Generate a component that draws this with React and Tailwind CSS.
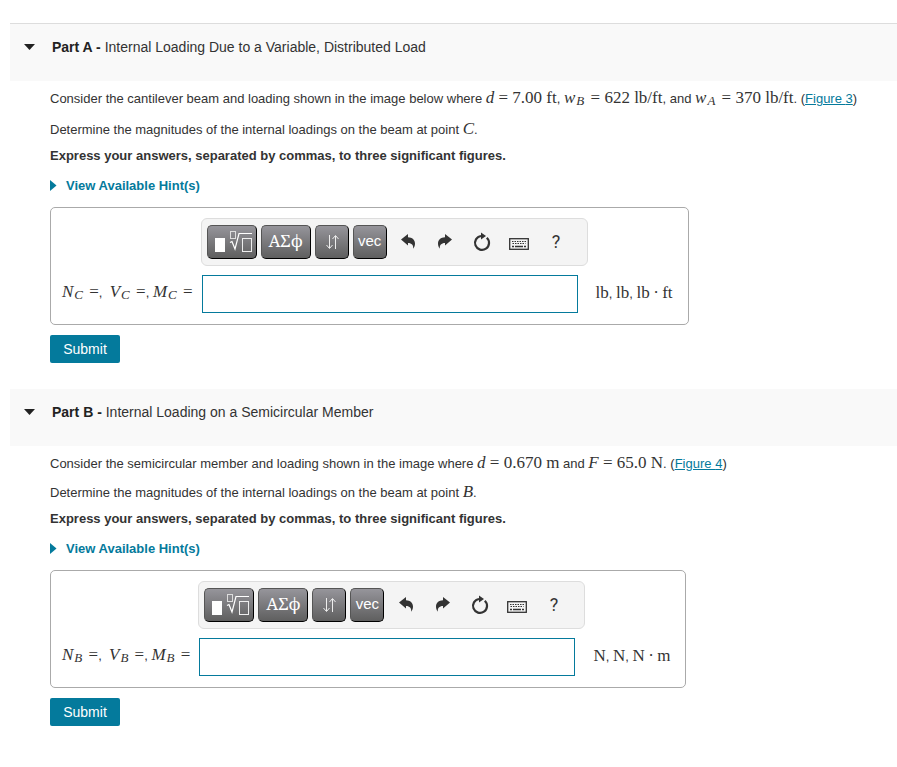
import React, { useState } from "react";

// Inline formula: upright numbers and units, italic variables with subscripts
const Formula = ({ children }) => (
  <span className="font-['Liberation_Serif',serif] text-[17px] leading-4">
    {children}
  </span>
);

const Variable = ({ name, sub }) => (
  <>
    <i>{name}</i>
    {sub && (
      <sub className="static mr-0.5 ml-px align-[-2px] text-[13px] leading-5 italic">
        {sub}
      </sub>
    )}
  </>
);

const TemplateIcon = () => (
  <svg width="40" height="26" viewBox="0 0 40 26" fill="none" aria-hidden="true">
    <rect x="3" y="9" width="10" height="14" fill="#fff" />
    <rect x="18.5" y="2.5" width="5" height="7" stroke="#ddd" />
    <path d="M18 13.5l2-1 3 7.5 4-15.5h13" stroke="#fff" strokeWidth="1.2" />
    <rect x="30.5" y="9.5" width="9" height="13" stroke="#eee" />
  </svg>
);

const ArrowsIcon = () => (
  <svg
    width="14"
    height="16"
    viewBox="0 0 14 16"
    fill="none"
    stroke="#eee"
    aria-hidden="true"
  >
    <path d="M4.5 1v13M1.5 11l3 3.5 3-3.5M10.5 15V2M7.5 5l3-3.5 3 3.5" />
  </svg>
);

const UndoIcon = () => (
  <svg width="16" height="18" viewBox="0 0 16 18" fill="#333" aria-hidden="true">
    <path d="M1 6.5L8 1v3.2c4.2.2 7 2.6 7 6.3 0 2-.6 3.8-1.8 5.3.3-3.8-1.4-5.7-5.2-5.8v2.5z" />
  </svg>
);

const RedoIcon = () => (
  <svg width="16" height="18" viewBox="0 0 16 18" fill="#333" aria-hidden="true">
    <path d="M15 6.5L8 1v3.2c-4.2.2-7 2.6-7 6.3 0 2 .6 3.8 1.8 5.3-.3-3.8 1.4-5.7 5.2-5.8v2.5z" />
  </svg>
);

const ResetIcon = () => (
  <svg width="18" height="20" viewBox="0 0 18 20" fill="none" aria-hidden="true">
    <path d="M13.8 5.8A7 7 0 1 1 8 4" stroke="#333" strokeWidth="2.2" />
    <path d="M8 .5L13 4 8 7.5z" fill="#333" />
  </svg>
);

const KeyboardIcon = () => (
  <svg width="20" height="12" viewBox="0 0 20 12" fill="none" aria-hidden="true">
    <rect x=".7" y=".7" width="18.6" height="10.6" stroke="#333" strokeWidth="1.3" />
    <path d="M3 3.5h14M3.5 5.5h13" stroke="#333" strokeDasharray="1.5 1" />
    <path d="M3 8.5h2M6 8.5h8M15 8.5h2" stroke="#333" strokeWidth="1.3" />
  </svg>
);

const darkButton =
  "flex h-[34px] items-center justify-center rounded-[5px] border border-[#555] border-r-black border-b-black bg-linear-to-b from-[#96959b] to-[#5f5f5f] text-white";

const iconButton = "flex h-[34px] w-[37px] items-center justify-center";

const Toolbar = () => (
  <div className="flex h-12 w-[387px] items-center rounded-md border border-[#ddd] bg-[#f4f4f4] pl-[5px]">
    <div className="flex gap-1">
      <button type="button" aria-label="Templates" className={`${darkButton} w-[50px]`}>
        <TemplateIcon />
      </button>
      <button
        type="button"
        aria-label="Symbols"
        className={`${darkButton} w-[50px] pb-0.5 font-['Noto_Serif','DejaVu_Serif',serif] text-[17px]`}
      >
        ΑΣϕ
      </button>
      <button type="button" aria-label="Arrows" className={`${darkButton} w-[34px]`}>
        <ArrowsIcon />
      </button>
      <button type="button" className={`${darkButton} w-[34px] pb-0.5 text-[15px]`}>
        vec
      </button>
    </div>
    <div className="ml-[3px] flex">
      <button type="button" aria-label="Undo" className={iconButton}>
        <UndoIcon />
      </button>
      <button type="button" aria-label="Redo" className={iconButton}>
        <RedoIcon />
      </button>
      <button type="button" aria-label="Reset" className={iconButton}>
        <ResetIcon />
      </button>
      <button
        type="button"
        aria-label="Keyboard shortcuts"
        className={`${iconButton} pt-1`}
      >
        <KeyboardIcon />
      </button>
      <button
        type="button"
        aria-label="Help"
        className={`${iconButton} font-[Roboto,sans-serif] text-lg text-[#333]`}
      >
        ?
      </button>
    </div>
  </div>
);

const AnswerBox = ({ id, label, units }) => {
  const [value, setValue] = useState("");

  return (
    <div className="mt-[10px] grid w-fit grid-cols-[auto_auto_auto] items-center gap-y-[9px] rounded-[5px] border border-[#aaa] pt-[10px] pr-[15px] pb-[11px] pl-[11px]">
      <div className="col-start-2">
        <Toolbar />
      </div>
      <label htmlFor={id} className="col-start-1 pr-2 whitespace-nowrap">
        {label}
      </label>
      <input
        id={id}
        type="text"
        value={value}
        onChange={(e) => setValue(e.target.value)}
        className="ml-px h-[38px] w-[376px] border border-[#047a9c] px-2 text-base outline-none"
      />
      <div className="pl-2 whitespace-nowrap">{units}</div>
    </div>
  );
};

const Unknown = ({ name, sub }) => (
  <Formula>
    <Variable name={name} sub={sub} /> =
  </Formula>
);

const Part = ({ name, title, question, point, units }) => {
  const [open, setOpen] = useState(true);

  return (
    <section className="mb-[26px]">
      <h2 className="h-[57px] bg-[#f9f9f9] pt-3 text-sm text-[#333]">
        <button
          type="button"
          aria-expanded={open}
          onClick={() => setOpen(!open)}
          className="flex items-center pl-[14px] leading-[22px]"
        >
          <svg width="11" height="6" viewBox="0 0 11 6" aria-hidden="true">
            <path d="M0 0h11L5.5 6z" fill="#222" />
          </svg>
          <span className="pl-[17px]">
            <b className="text-[#222]">Part {name} -</b> {title}
          </span>
        </button>
      </h2>
      {open && (
        <div className="pl-10">
          <p className="mt-2 leading-5">{question}</p>
          <p className="mt-2 leading-[22px]">
            Determine the magnitudes of the internal loadings on the beam at
            point{" "}
            <Formula>
              <Variable name={point} />
            </Formula>
            .
          </p>
          <p className="mt-1 leading-[22px] font-bold">
            Express your answers, separated by commas, to three significant
            figures.
          </p>
          <button
            type="button"
            className="mt-2 flex items-center gap-[9px] leading-[22px] font-bold text-[#047a9c]"
          >
            <svg width="7" height="12" viewBox="0 0 7 12" aria-hidden="true">
              <path d="M0 0l6.5 5.5L0 11z" fill="#047a9c" />
            </svg>
            View Available Hint(s)
          </button>
          <AnswerBox
            id={`answer-${name}`}
            label={
              <>
                <Unknown name="N" sub={point} />,&nbsp;{" "}
                <Unknown name="V" sub={point} />,{" "}
                <Unknown name="M" sub={point} />
              </>
            }
            units={units}
          />
          <button
            type="button"
            className="mt-[10px] h-7 w-[70px] rounded-xs bg-[#047a9c] text-sm text-white"
          >
            Submit
          </button>
        </div>
      )}
    </section>
  );
};

const FigureLink = ({ number }) => (
  <>
    (
    <a href={`#figure-${number}`} className="text-[#047a9c] underline">
      Figure {number}
    </a>
    )
  </>
);

const App = () => (
  <main className="pt-[23px] pl-[10px] font-['Liberation_Sans',Arial,sans-serif] text-[13px] text-[#333]">
    <div className="border-t border-[#ddd]">
      <Part
        name="A"
        title="Internal Loading Due to a Variable, Distributed Load"
        point="C"
        question={
          <>
            Consider the cantilever beam and loading shown in the image below
            where{" "}
            <Formula>
              <Variable name="d" /> = 7.00 ft
            </Formula>
            ,{" "}
            <Formula>
              <Variable name="w" sub="B" /> = 622 lb/ft
            </Formula>
            , and{" "}
            <Formula>
              <Variable name="w" sub="A" /> = 370 lb/ft
            </Formula>
            . <FigureLink number={3} />
          </>
        }
        units={
          <>
            <Formula>lb</Formula>, <Formula>lb</Formula>,{" "}
            <Formula>lb&thinsp;·&thinsp;ft</Formula>
          </>
        }
      />
      <Part
        name="B"
        title="Internal Loading on a Semicircular Member"
        point="B"
        question={
          <>
            Consider the semicircular member and loading shown in the image
            where{" "}
            <Formula>
              <Variable name="d" /> = 0.670 m
            </Formula>{" "}
            and{" "}
            <Formula>
              <Variable name="F" /> = 65.0 N
            </Formula>
            . <FigureLink number={4} />
          </>
        }
        units={
          <>
            <Formula>N</Formula>, <Formula>N</Formula>,{" "}
            <Formula>N&thinsp;·&thinsp;m</Formula>
          </>
        }
      />
    </div>
  </main>
);

export default App;
